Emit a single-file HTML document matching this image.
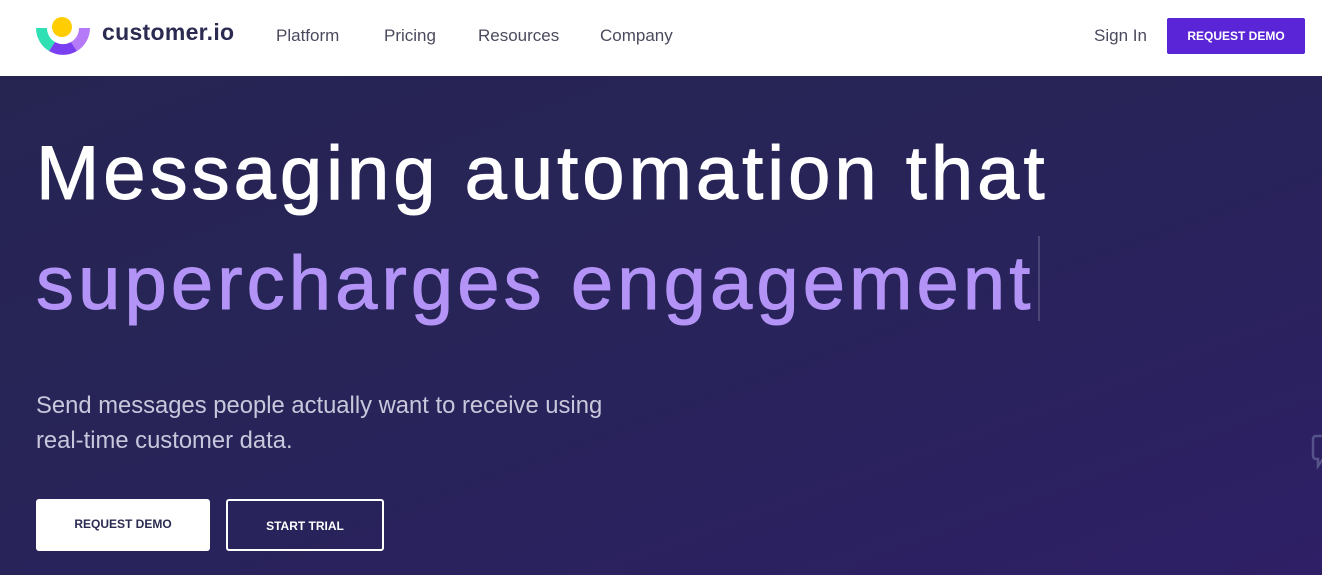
<!DOCTYPE html>
<html><head><style>
*{margin:0;padding:0;box-sizing:border-box}
body{width:1322px;height:575px;overflow:hidden;font-family:"Liberation Sans",sans-serif;background:#fff}
.nav{height:76px;background:#fff;position:relative}
.nav a{position:absolute;top:26px;font-size:17px;color:#4a4a5e;text-decoration:none}
.logo{position:absolute;left:35px;top:14px}
.brand{position:absolute;left:102px;top:19px;font-size:23px;font-weight:bold;color:#2b2b52;letter-spacing:.3px}
.btn{position:absolute;left:1167px;top:18px;width:138px;height:36px;background:#5a25d6;color:#fff;font-size:12px;font-weight:bold;text-align:center;line-height:36px;border-radius:2px}
.hero{position:absolute;top:76px;left:0;width:1322px;height:499px;background:linear-gradient(160deg,#262552 0%,#28235a 55%,#2f1f66 100%)}
h1{position:absolute;left:36px;font-size:76px;font-weight:normal;letter-spacing:4px;white-space:nowrap;-webkit-text-stroke:1px currentColor}
.l1{top:54px;color:#fff}
.l2{top:164px;color:#b394f6;letter-spacing:4.1px}
.cursor{position:absolute;left:1038px;top:160px;width:2px;height:85px;background:#4a4777}
p{position:absolute;left:36px;top:312px;font-size:23.8px;line-height:35px;color:#c9c7dc}
.b1,.b2{position:absolute;top:423px;height:52px;font-size:12px;font-weight:bold;text-align:center;line-height:50px;border-radius:3px}
.b1{left:36px;width:174px;background:#fff;color:#2b2b52}
.b2{left:226px;width:158px;border:2px solid #fff;color:#fff}
</style></head><body>
<div class="nav">
<svg class="logo" width="56" height="44" viewBox="0 0 56 44">
<path d="M1 14 A27 27 0 0 0 14 37 L20 28 A16 16 0 0 1 12 14Z" fill="#2fe0b5"/>
<path d="M14 37 A27 27 0 0 0 42 37 L36 28 A16 16 0 0 1 20 28Z" fill="#7b3ff2"/>
<path d="M42 37 A27 27 0 0 0 55 14 L44 14 A16 16 0 0 1 36 28Z" fill="#b47af7"/>
<circle cx="27" cy="13" r="10" fill="#ffcd00"/>
</svg>
<div class="brand">customer.io</div>
<a style="left:276px">Platform</a>
<a style="left:384px">Pricing</a>
<a style="left:478px">Resources</a>
<a style="left:600px">Company</a>
<a style="left:1094px">Sign In</a>
<div class="btn">REQUEST DEMO</div>
</div>
<div class="hero">
<h1 class="l1">Messaging automation that</h1>
<h1 class="l2">supercharges engagement</h1>
<div class="cursor"></div>
<p>Send messages people actually want to receive using<br>real-time customer data.</p>
<div class="b1">REQUEST DEMO</div>
<div class="b2">START TRIAL</div>
<svg style="position:absolute;left:1310px;top:358px" width="14" height="36"><path d="M12 2 H6 a3 3 0 0 0 -3 3 V22 a3 3 0 0 0 3 3 H8 V32 L13 25" fill="none" stroke="#55538a" stroke-width="2.5"/></svg>
</div>
</body></html>
